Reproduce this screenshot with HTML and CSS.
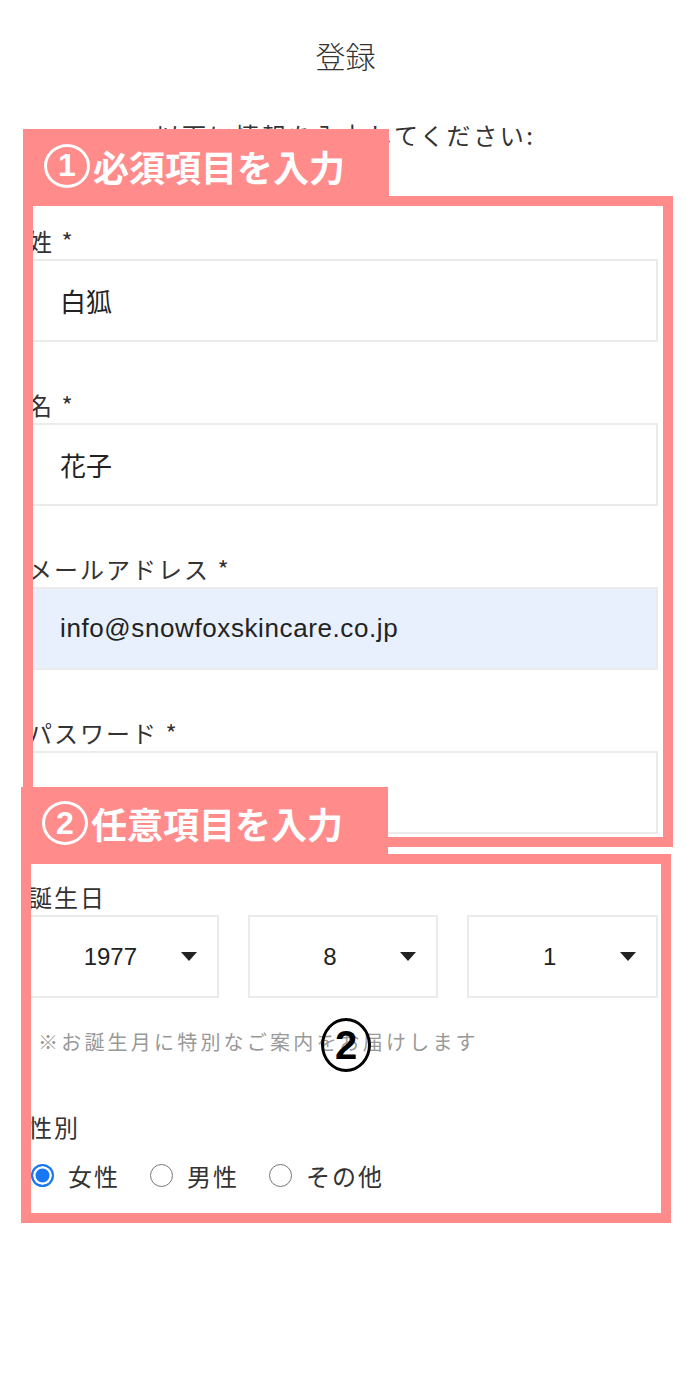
FILE: index.html
```html
<!DOCTYPE html>
<html lang="ja">
<head>
  <meta charset="UTF-8">
  <title>登録</title>
  <link rel="stylesheet" href="styles.css">
</head>
<body>

  <div class="page">
    <h1 class="title">登録</h1>
    <p class="lead">以下に情報を入力してください:</p>

    <form class="form">
      <div class="field">
        <label class="label" for="sei">姓 *</label>
        <input class="input" type="text" id="sei" value="白狐">
      </div>

      <div class="field">
        <label class="label" for="mei">名 *</label>
        <input class="input" type="text" id="mei" value="花子">
      </div>

      <div class="field">
        <label class="label" for="mail">メールアドレス *</label>
        <input class="input input-mail" type="email" id="mail" value="info@snowfoxskincare.co.jp">
      </div>

      <div class="field">
        <label class="label" for="pass">パスワード *</label>
        <input class="input" type="password" id="pass">
      </div>

      <div class="field">
        <label class="label">誕生日</label>
        <div class="selects">
          <div class="select"><span class="value">1977</span><span class="caret"></span></div>
          <div class="select"><span class="value">8</span><span class="caret"></span></div>
          <div class="select"><span class="value">1</span><span class="caret"></span></div>
        </div>
        <p class="note">※お誕生月に特別なご案内をお届けします</p>
      </div>

      <div class="field field-last">
        <label class="label">性別</label>
        <div class="radios">
          <span class="radio"><span class="dot checked"></span>女性</span>
          <span class="radio"><span class="dot"></span>男性</span>
          <span class="radio"><span class="dot"></span>その他</span>
        </div>
      </div>
    </form>

    <!-- 注釈 -->
    <div class="box box-1"></div>
    <div class="tag tag-1"><span class="num">1</span>必須項目を入力</div>
    <div class="box box-2"></div>
    <div class="tag tag-2"><span class="num">2</span>任意項目を入力</div>
    <div class="pin">2</div>
  </div>

</body>
</html>
```

FILE: styles.css
```css
body { margin: 0; padding: 0; background: #fff; font-family: "Noto Sans CJK JP", sans-serif; color: #333; }
.page { position: relative; width: 691px; height: 1397px; padding-top: 35px; box-sizing: border-box; }

.title { margin: 0; font-size: 30px; line-height: 40px; font-weight: 300; text-align: center; color: #333; }
.lead { margin: 43px 0 0; font-size: 24px; line-height: 34px; letter-spacing: 2.6px; text-align: center; color: #333; }

.form { margin: 73px 33px 0 28px; }
.field { margin-bottom: 47px; }
.label { display: block; font-size: 24px; line-height: 32px; letter-spacing: 2px; margin-bottom: 2px; color: #333; }
.input {
  display: block;
  box-sizing: border-box;
  width: 100%;
  height: 83px;
  margin: 0;
  padding: 0 0 0 30px;
  border: 2px solid #ebebeb;
  background: #fff;
  font-family: "Liberation Sans", "Noto Sans CJK JP", sans-serif;
  font-size: 26px;
  color: #222;
  outline: none;
}
.input-mail { background: #e8f0fe; letter-spacing: 0.6px; }

.selects { display: grid; grid-template-columns: repeat(3, 1fr); gap: 29px; }
.select {
  display: flex;
  align-items: center;
  box-sizing: border-box;
  height: 83px;
  padding: 0 20px 0 10px;
  border: 2px solid #ebebeb;
}
.value { flex: 1; text-align: center; font-family: "Liberation Sans", sans-serif; font-size: 24px; color: #222; }
.caret { width: 0; height: 0; border-left: 8px solid transparent; border-right: 8px solid transparent; border-top: 9px solid #222; }

.note { margin: 30px 0 0; padding-left: 10px; font-size: 20px; line-height: 28px; letter-spacing: 3.2px; color: #999; }
.field-last { margin-top: 55px; }

.radios { display: flex; align-items: center; gap: 30px; margin-top: 16px; padding-left: 3px; height: 32px; }
.radio { display: flex; align-items: center; gap: 14px; font-size: 24px; letter-spacing: 2px; color: #333; }
.dot { width: 23px; height: 23px; box-sizing: border-box; border: 1.5px solid #777; border-radius: 50%; }
.dot.checked { border: 2.5px solid #1877f2; background: #1877f2; box-shadow: inset 0 0 0 2.5px #fff; }

/* annotation layer */
.box { position: absolute; box-sizing: border-box; border: 10px solid #ff8b8b; }
.box-1 { left: 23px; top: 196px; width: 650px; height: 651px; }
.box-2 { left: 21px; top: 854px; width: 650px; height: 369px; }
.tag {
  position: absolute;
  display: flex;
  align-items: center;
  box-sizing: border-box;
  padding-left: 21px;
  background: #ff8b8b;
  color: #fff;
  font-size: 36px;
  font-weight: 700;
  letter-spacing: 0;
}
.tag-1 { left: 23px; top: 129px; width: 366px; height: 67px; padding-top: 6px; }
.tag-2 { left: 21px; top: 787px; width: 367px; height: 76px; padding-bottom: 4px; }
.num {
  display: flex;
  align-items: center;
  justify-content: center;
  box-sizing: border-box;
  width: 46px;
  height: 44px;
  margin-right: 3px;
  border: 3.5px solid #fff;
  border-radius: 50%;
  font-family: "Liberation Sans", sans-serif;
  font-size: 32px;
  font-weight: 700;
}
.pin {
  position: absolute;
  left: 321px;
  top: 1018px;
  width: 50px;
  height: 54px;
  box-sizing: border-box;
  border: 3px solid #000;
  border-radius: 50%;
  display: flex;
  align-items: center;
  justify-content: center;
  font-family: "Liberation Sans", sans-serif;
  font-size: 40px;
  font-weight: 700;
  color: #000;
}
```
